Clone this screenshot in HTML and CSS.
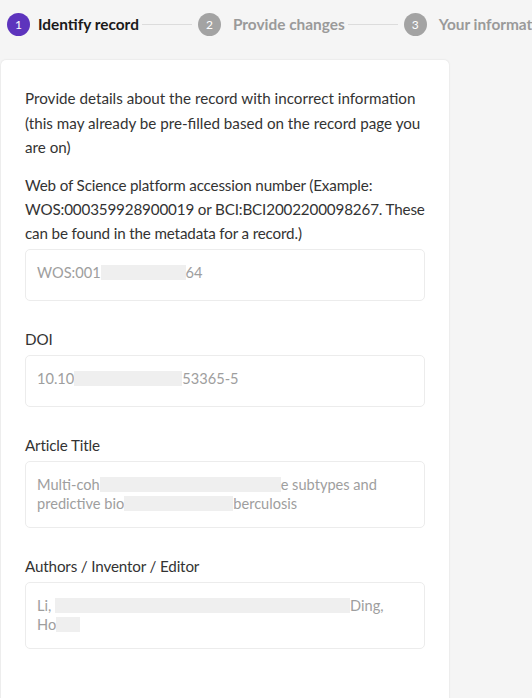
FILE: index.html
```html
<!DOCTYPE html>
<html lang="en">
<head>
  <meta charset="UTF-8" />
  <title>Correct a record</title>
  <link rel="stylesheet" href="styles.css">
</head>
<body>

<div class="stepper">
  <div class="step current"><span class="num">1</span> Identify record</div>
  <div class="step-line"></div>
  <div class="step"><span class="num">2</span> Provide changes</div>
  <div class="step-line"></div>
  <div class="step"><span class="num">3</span> Your information</div>
</div>

<div class="card">
  <p class="intro">Provide details about the record with incorrect information (this may already be pre-filled based on the record page you are on)</p>

  <label class="field-label first">Web of Science platform accession number (Example: WOS:000359928900019 or BCI:BCI2002200098267. These can be found in the metadata for a record.)</label>
  <div class="field">WOS:001<span class="mask mask-wos"></span>64</div>

  <label class="field-label">DOI</label>
  <div class="field">10.10<span class="mask mask-doi"></span>53365-5</div>

  <label class="field-label">Article Title</label>
  <div class="field">Multi-coh<span class="mask mask-title"></span>e subtypes and predictive bio<span class="mask mask-title2"></span>berculosis</div>

  <label class="field-label">Authors / Inventor / Editor</label>
  <div class="field">Li, <span class="mask mask-authors"></span>Ding, <span class="keep">Ho<span class="mask mask-short"></span></span></div>
</div>

</body>
</html>
```

FILE: styles.css
```css
body {
  margin: 0;
  background: #f5f5f5;
  font-family: 'Lato', 'Liberation Sans', sans-serif;
  color: #333;
  overflow: hidden;
}

.stepper {
  display: flex;
  align-items: center;
  height: 48px;
  padding-left: 7px;
  white-space: nowrap;
}

.step {
  display: flex;
  align-items: center;
  gap: 8px;
  font-size: 15.4px;
  font-weight: 700;
  color: #9a9a9a;
  flex-shrink: 0;
}

.step.current {
  color: #1a1a1a;
}

.num {
  display: inline-flex;
  justify-content: center;
  align-items: center;
  width: 23px;
  height: 23px;
  border-radius: 50%;
  background: #a3a3a3;
  color: #fff;
  font-size: 12px;
  font-weight: 400;
}

.step:not(.current) .num {
  margin-right: 4px;
}

.step.current .num {
  background: #5d34bd;
}

.step-line {
  flex-shrink: 0;
  width: 50px;
  height: 1px;
  background: #dcdcdc;
  margin: 0 6px 0 3px;
}

.card {
  background: #fff;
  margin: 12px 0 0 1px;
  width: 400px;
  padding: 26px 24px 40px;
  border-radius: 5px;
  box-shadow: 0 0 2px rgba(0, 0, 0, 0.12);
  min-height: 620px;
}

.intro {
  margin: 0;
  font-size: 15.2px;
  line-height: 24.5px;
}

.field-label {
  display: block;
  margin: 26px 0 4px;
  font-size: 15.2px;
  line-height: 24px;
  letter-spacing: -0.15px;
}

.field-label.first {
  margin-top: 13px;
}

.field {
  border: 1px solid #ececec;
  border-radius: 5px;
  padding: 13px 11px 14px;
  font-family: 'Lato', 'Liberation Sans', sans-serif;
  font-size: 14.6px;
  line-height: 19px;
  color: #9e9e9e;
  min-height: 23px;
}

/* blurred-out parts of the pre-filled values */
.mask {
  display: inline-block;
  height: 15px;
  vertical-align: -2px;
  background: #efefef;
}

.mask-wos { width: 85px; }
.mask-doi { width: 108px; }
.mask-title { width: 181px; }
.mask-title2 { width: 109px; }
.mask-authors { width: 295px; }
.mask-short { width: 24px; }

.keep {
  white-space: nowrap;
}
```
